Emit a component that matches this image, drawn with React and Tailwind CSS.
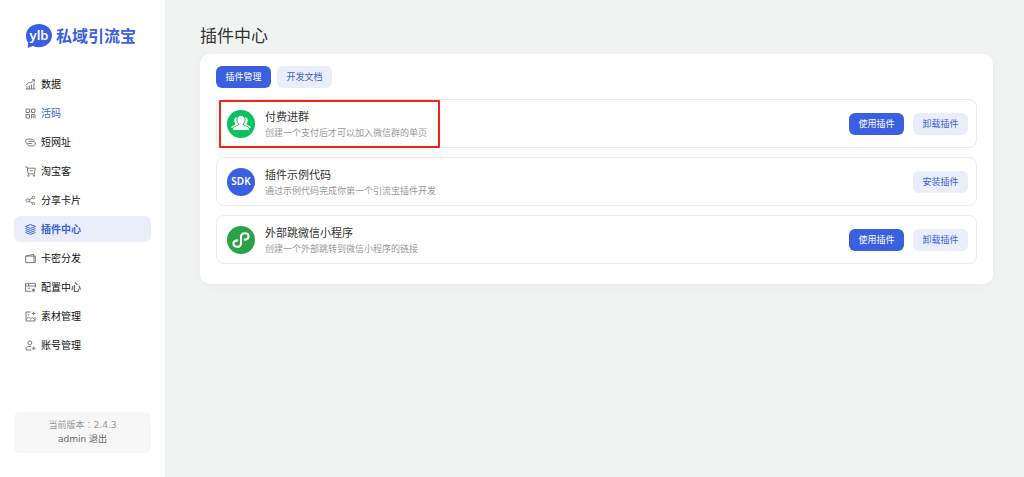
import React from 'react';

const icons = {
  data: (
    <>
      <path d="M1 14.500h14M3 14.500v-4M6.300 14.500V9.500M9.600 14.500V8M13 14.500V5" />
      <path d="M1.500 9 6 4.500l2.500 1L13.500 1M10.300 1h3.400v3.300" />
    </>
  ),
  qr: (
    <>
      <path d="M1.500 1.500h5v5h-5zM9.500 1.500h5v5h-5zM1.500 9.500h5v5h-5z" />
      <path d="M9.500 9v6M9.500 9.500h5V15M12 11v4" />
    </>
  ),
  link: (
    <>
      <path d="M10 9.500H5C2.600 9.500.8 8.200.8 6.300S2.600 3 5 3h3.500c2.800 0 4.700 1.500 4.700 3.500" />
      <path d="M5 6.300h5.500c2.800 0 4.700 1.400 4.700 3.400S13.500 13 11 13H8c-3 0-4.800-1.200-5-3.500" />
    </>
  ),
  cart: (
    <>
      <path d="M.5 1.500h2.700l1.300 10h9.300L15 3.200H3.500M7 6.800h4.500" />
      <circle cx="5" cy="14" r="1" />
      <circle cx="13" cy="14" r="1" />
    </>
  ),
  share: (
    <>
      <circle cx="3.800" cy="8" r="2.300" />
      <circle cx="12.300" cy="3.500" r="1.800" />
      <circle cx="12.300" cy="12.500" r="1.800" />
      <path d="m6 7 4.600-2.500M6 9l4.600 2.600" />
    </>
  ),
  layers: (
    <>
      <path d="M8 .8 15.300 3.600 8 6.400.7 3.600z" />
      <path d="m.7 6.600 7.300 2.800 7.300-2.800M.7 9.500 8 12.300l7.300-2.800M.7 12.300 8 15.100l7.300-2.800" />
    </>
  ),
  wallet: <path d="M1 4.500h12V14H1zM1 4.500l11.500-2.500v2.500M13 4.500h2V14h-2" />,
  config: (
    <>
      <path d="M8.500 13.500H.8V2h14.400v6M.8 5.800h14.400M4 9h3.500M5 2v3.800" />
      <path d="M12.200 9.300v5.400M9.800 10.600l4.800 2.800M14.600 10.600l-4.800 2.800" />
    </>
  ),
  image: (
    <>
      <path d="M8 1.500H1.500v13H14.500V8.500" />
      <path d="m1.800 12 3.200-3 3 2.500 2.500-2 3.800 2.500M4 5.500h2M12.500 1v5M10 3.500h5" />
    </>
  ),
  user: (
    <>
      <circle cx="7" cy="4.300" r="2.900" />
      <path d="M9 14.500H1.500v-2c0-1.700 1.300-3 3-3H9M12.700 9.500v5M10 12h5.400" />
    </>
  ),
};

function NavIcon({ name }) {
  return (
    <svg viewBox="0 0 16 16" className="size-[11px] shrink-0" fill="none" stroke="currentColor" strokeWidth="1.4" aria-hidden="true">
      {icons[name]}
    </svg>
  );
}

const nav = [
  { label: '数据', icon: 'data' },
  { label: '活码', icon: 'qr', hover: true },
  { label: '短网址', icon: 'link' },
  { label: '淘宝客', icon: 'cart' },
  { label: '分享卡片', icon: 'share' },
  { label: '插件中心', icon: 'layers', active: true },
  { label: '卡密分发', icon: 'wallet' },
  { label: '配置中心', icon: 'config' },
  { label: '素材管理', icon: 'image' },
  { label: '账号管理', icon: 'user' },
];

function Logo() {
  return (
    <a href="#" className="ml-[25px] flex h-7 items-center gap-[3px] text-[#3a5fe0]">
      <svg viewBox="0 0 28 26" className="h-[26px] w-7 shrink-0" role="img" aria-label="ylb">
        <path d="M14 1C6.600 1 1 6 1 12.500c0 3.300.8 5.500 2.200 7.300L2.600 25l5.200-2c1.800.8 3.900 1.200 6.200 1.200 7.400 0 13-5.200 13-11.700S21.400 1 14 1z" fill="currentColor" />
        <text x="14" y="17" textAnchor="middle" fill="#fff" className="font-['Noto_Sans'] text-[13px] font-semibold">ylb</text>
      </svg>
      <span className="text-[16px] leading-none font-bold">私域引流宝</span>
    </a>
  );
}

function GroupIcon() {
  return (
    <svg viewBox="0 0 28 28" className="size-7 shrink-0" aria-hidden="true">
      <circle cx="14" cy="14" r="14" fill="#0ac160" />
      <g fill="#fff" stroke="#0ac160" strokeWidth=".9">
        <path d="M9.800 7c1.600 0 2.800 1.300 2.800 3.300 0 1.500-.6 2.600-1.300 3.300v4.900H4v-1.300c0-.8.400-1.200 1.200-1.500l2.100-.9c.7-.3.900-.7.600-1.300-.7-.8-1.200-1.800-1.200-3.200C6.700 8.300 7.900 7 9.800 7z" />
        <path d="M18.200 7c-1.600 0-2.800 1.300-2.800 3.300 0 1.500.6 2.600 1.300 3.300v4.900H24v-1.300c0-.8-.4-1.200-1.200-1.500l-2.100-.9c-.7-.3-.9-.7-.6-1.300.7-.8 1.200-1.800 1.200-3.200 0-2-1.200-3.300-3.100-3.300z" />
        <path d="M14 5.500c2.500 0 4.100 1.700 4.100 4.200 0 1.900-.8 3.200-1.700 4.100-.3.700 0 1.200.8 1.500l3.700 1.500c.9.400 1.300.9 1.300 1.700v2H5.800v-2c0-.8.400-1.300 1.300-1.700l3.700-1.500c.8-.3 1.100-.8.8-1.500-.9-.9-1.700-2.200-1.700-4.100 0-2.500 1.600-4.200 4.100-4.200z" />
      </g>
    </svg>
  );
}

function SdkIcon() {
  return (
    <svg viewBox="0 0 28 28" className="size-7 shrink-0" aria-hidden="true">
      <circle cx="14" cy="14" r="14" fill="#3a5fe0" />
      <text x="14" y="17" textAnchor="middle" fill="#fff" className="font-['Noto_Sans'] text-[10px] font-semibold">SDK</text>
    </svg>
  );
}

function MiniProgramIcon() {
  return (
    <svg viewBox="0 0 28 28" className="size-7 shrink-0" aria-hidden="true">
      <circle cx="14" cy="14" r="14" fill="#2ba245" />
      <path d="M17.800 13.600c2.200-.3 3.800-1.500 3.800-3.200 0-1.900-1.700-3.200-3.800-3.200s-3.800 1.400-3.800 3.400v6.800c0 2-1.700 3.400-3.800 3.400s-3.800-1.300-3.800-3.200c0-1.700 1.600-2.900 3.800-3.200" fill="none" stroke="#fff" strokeWidth="2.100" strokeLinecap="round" />
    </svg>
  );
}

function Button({ primary, children }) {
  return (
    <button
      type="button"
      className={
        primary
          ? 'h-[22px] w-[55px] rounded-md bg-[#3a5fe0] text-[9px] text-white'
          : 'h-[22px] w-[55px] rounded-md bg-[#eaeefb] text-[9px] text-[#3a5fe0]'
      }
    >
      {children}
    </button>
  );
}

const plugins = [
  { title: '付费进群', desc: '创建一个支付后才可以加入微信群的单页', Icon: GroupIcon, installed: true, marked: true },
  { title: '插件示例代码', desc: '通过示例代码完成你第一个引流宝插件开发', Icon: SdkIcon, installed: false },
  { title: '外部跳微信小程序', desc: '创建一个外部跳转到微信小程序的链接', Icon: MiniProgramIcon, installed: true },
];

function PluginRow({ title, desc, Icon, installed, marked }) {
  return (
    <li className="relative flex h-[49px] items-center rounded-lg border border-[#ebebeb] pr-2 pl-[10px]">
      <Icon />
      <div className="ml-[10px] min-w-0 flex-1 pt-[2px]">
        <h2 className="text-[11px] leading-4 text-[#333]">{title}</h2>
        <p className="text-[9px] leading-4 text-[#999]">{desc}</p>
      </div>
      <div className="flex shrink-0 gap-[9px]">
        {installed ? (
          <>
            <Button primary>使用插件</Button>
            <Button>卸载插件</Button>
          </>
        ) : (
          <Button>安装插件</Button>
        )}
      </div>
      {marked && <span className="pointer-events-none absolute top-0 left-[2px] h-[48px] w-[221px] rounded-[1px] border-2 border-[#f2231b]" />}
    </li>
  );
}

export default function App() {
  return (
    <div className="flex min-h-screen bg-[#f1f3f3] font-['Noto_Sans','Noto_Sans_CJK_SC',sans-serif]">
      <aside className="flex w-[165px] shrink-0 flex-col bg-white pt-[22px] pb-6">
        <Logo />
        <nav className="mx-[14px] mt-[21px] flex flex-col gap-[3px]">
          {nav.map(({ label, icon, active, hover }) => (
            <a
              key={label}
              href="#"
              className={
                active
                  ? 'flex h-[26px] items-center gap-[5px] rounded-md bg-[#eaeefb] pl-[11px] text-[10px] font-bold text-[#3a5fe0]'
                  : 'flex h-[26px] items-center gap-[5px] rounded-md pl-[11px] text-[10px] text-[#111]'
              }
            >
              <span className={active ? 'text-[#3a5fe0]' : 'text-[#777]'}>
                <NavIcon name={icon} />
              </span>
              <span className={hover ? 'text-[#3a5fe0]' : ''}>{label}</span>
            </a>
          ))}
        </nav>
        <div className="mx-[14px] mt-auto rounded-md bg-[#f7f7f7] pt-[6px] pb-[7px] text-center font-['DejaVu_Sans','Noto_Sans_CJK_SC',sans-serif] text-[9px] leading-[14px] text-[#999]">
          <p>
            当前版本<span className="font-['Noto_Sans_CJK_TC',sans-serif]" lang="zh-Hant">：</span>2.4.3
          </p>
          <p className="text-[#666]">
            admin <a href="#">退出</a>
          </p>
        </div>
      </aside>
      <main className="min-w-0 flex-1 pt-[23px] pr-[31px] pl-[35px]">
        <h1 className="text-[17px] leading-[26px] text-[#333]">插件中心</h1>
        <section className="mt-[5px] rounded-[10px] bg-white px-4 pt-3 pb-5 shadow-[0_2px_8px_rgba(0,0,0,0.03)]">
          <div className="flex gap-[6px]">
            <Button primary>插件管理</Button>
            <Button>开发文档</Button>
          </div>
          <ul className="mt-[11px] flex flex-col gap-[9px]">
            {plugins.map((p) => (
              <PluginRow key={p.title} {...p} />
            ))}
          </ul>
        </section>
      </main>
    </div>
  );
}
